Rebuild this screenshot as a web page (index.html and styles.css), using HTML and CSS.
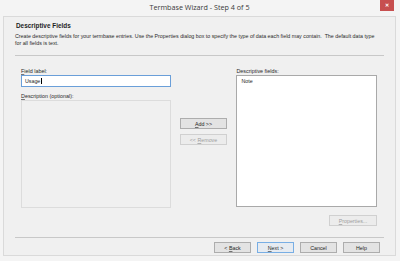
FILE: index.html
```html
<!DOCTYPE html>
<html lang="en">
<head>
  <meta charset="UTF-8" />
  <title>Termbase Wizard - Step 4 of 5</title>
  <link rel="stylesheet" href="styles.css">
</head>
<body>

  <div class="window">
    <div class="titlebar">
      <span></span>
      <div class="title">Termbase Wizard - Step 4 of 5</div>
      <div class="close">&#x2715;</div>
    </div>

    <div class="client">
      <div class="header">
        <div class="heading">Descriptive Fields</div>
        <div class="intro">Create descriptive fields for your termbase entries. Use the Properties dialog box to specify the type of data each field may contain.&nbsp; The default data type<br>for all fields is text.</div>
      </div>

      <div class="content">
        <div class="left-col">
          <label class="lbl"><u>F</u>ield label:</label>
          <div class="textbox">Usage<span class="caret"></span></div>
          <label class="lbl lbl-desc"><u>D</u>escription (optional):</label>
          <div class="desc-box"></div>
        </div>

        <div class="mid-col">
          <button class="btn"><u>A</u>dd &gt;&gt;</button>
          <button class="btn disabled">&lt;&lt; <u>R</u>emove</button>
        </div>

        <div class="right-col">
          <label class="lbl">Descriptive fields:</label>
          <div class="listbox">
            <div class="item">Note</div>
          </div>
          <div class="props-row">
            <button class="btn disabled"><u>P</u>roperties...</button>
          </div>
        </div>
      </div>

      <div class="footer">
        <button class="btn">&lt; <u>B</u>ack</button>
        <button class="btn default"><u>N</u>ext &gt;</button>
        <button class="btn">Cancel</button>
        <button class="btn">Help</button>
      </div>
    </div>
  </div>

</body>
</html>
```

FILE: styles.css
```css
body {
  margin: 0;
  padding: 0;
  background: #f4f4f4;
  font-family: "Liberation Sans", Arial, sans-serif;
}
.window {
  width: 400px;
  height: 261px;
  box-sizing: border-box;
  padding: 0 4px 5px 3px;
  background: #f4f4f4;
  display: flex;
  flex-direction: column;
}
.titlebar {
  height: 16px;
  display: grid;
  grid-template-columns: 1fr auto 1fr;
  align-items: start;
}
.title {
  font-family: "Open Sans", sans-serif;
  font-size: 7.2px;
  color: #3a3a3a;
  padding-top: 3px;
  line-height: 9px;
}
.close {
  justify-self: end;
  margin-right: 2px;
  width: 14px;
  height: 11px;
  background: #c74f4f;
  color: #fff;
  font-size: 5px;
  font-weight: bold;
  line-height: 11px;
  text-align: center;
}
.client {
  flex: 1;
  border: 1px solid #dadada;
  background: #f0f0f0;
  display: flex;
  flex-direction: column;
  color: #1e1e1e;
}
.header {
  margin: 0 11px;
  padding: 5px 0 9px;
  border-bottom: 1px solid #c8c8c8;
}
.heading {
  font-size: 6.4px;
  font-weight: bold;
  line-height: 8px;
  margin-left: 1px;
}
.intro {
  margin-top: 3px;
  font-size: 5.3px;
  line-height: 6.5px;
  color: #2a2a2a;
  white-space: nowrap;
}
.content {
  display: flex;
  padding: 12px 18px 0 17px;
  height: 169px;
}
.lbl {
  display: block;
  font-size: 5.4px;
  line-height: 7px;
  color: #2a2a2a;
}
.lbl u, .btn u {
  text-decoration-thickness: 0.4px;
  text-decoration-color: rgba(0, 0, 0, 0.5);
}
.btn.disabled u {
  text-decoration-color: rgba(0, 0, 0, 0.25);
}
.left-col {
  width: 150px;
  display: flex;
  flex-direction: column;
}
.textbox {
  height: 12px;
  box-sizing: border-box;
  border: 1px solid #6a9fd9;
  background: #fff;
  font-size: 5.3px;
  line-height: 10px;
  padding-left: 3px;
  display: flex;
  align-items: center;
}
.caret {
  width: 0;
  height: 6px;
  border-right: 0.6px solid #000;
  margin-left: 0.5px;
}
.lbl-desc {
  margin-top: 6px;
}
.desc-box {
  height: 108px;
  box-sizing: border-box;
  border: 1px solid #dcdcdc;
  background: #f0f0f0;
}
.mid-col {
  width: 48px;
  margin: 50px 9px 0 9px;
  display: flex;
  flex-direction: column;
  gap: 5px;
}
.btn {
  height: 11px;
  padding: 0;
  box-sizing: border-box;
  border: 1px solid #adadad;
  background: #e3e3e3;
  font-family: "Liberation Sans", Arial, sans-serif;
  font-size: 5.3px;
  color: #1e1e1e;
}
.btn.disabled {
  color: #9c9c9c;
  border-color: #d0d0d0;
  background: #ececec;
}
.btn.default {
  border-color: #78aee4;
  background: #e6ebf1;
}
.right-col {
  width: 141px;
  display: flex;
  flex-direction: column;
}
.listbox {
  height: 132px;
  box-sizing: border-box;
  border: 1px solid #a9a9a9;
  background: #fff;
  padding: 2px 4px;
}
.item {
  font-size: 5.3px;
  line-height: 6px;
}
.props-row {
  display: flex;
  justify-content: flex-end;
  margin-top: 8px;
}
.props-row .btn {
  width: 48px;
}
.footer {
  margin: 0 11px;
  border-top: 1px solid #c8c8c8;
  padding-top: 4px;
  display: flex;
  justify-content: flex-end;
  gap: 6px;
  padding-right: 4px;
}
.footer .btn {
  width: 37px;
}
```
